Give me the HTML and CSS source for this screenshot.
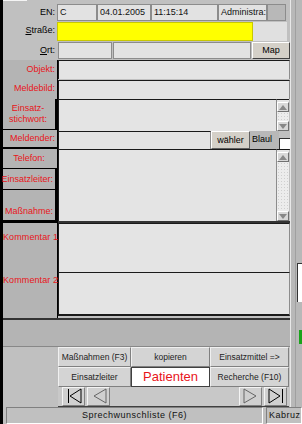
FILE: index.html
```html
<!DOCTYPE html>
<html lang="de">
<head>
    <meta charset="UTF-8">
    <title>Einsatz</title>
    <link rel="stylesheet" href="styles.css">
</head>
<body>
<div class="screen">
    <div class="body">
        <div class="main">
            <div class="topstrip"><span class="tabline"></span></div>

            <div class="row r1">
                <div class="lbl">EN:</div>
                <div class="fld w40">C</div>
                <div class="fld w54">04.01.2005</div>
                <div class="fld w67">11:15:14</div>
                <div class="fld w49">Administra:</div>
                <div class="fld dark w19"></div>
            </div>
            <div class="row r2">
                <div class="lbl"><u>S</u>traße:</div>
                <div class="fld yellow w196"></div>
                <div class="fld plain w34"></div>
            </div>
            <div class="row r3">
                <div class="lbl"><u>O</u>rt:</div>
                <div class="fld w54"></div>
                <div class="fld w138"></div>
                <div class="btn map">Map</div>
            </div>

            <div class="sect s-a">
                <div class="labels">
                    <div class="lbox h39">
                        <div class="rl" style="height:19px">Objekt:</div>
                        <div class="rl" style="height:19px">Meldebild:</div>
                    </div>
                </div>
                <div class="fields">
                    <div class="area" style="height:19px"></div>
                    <div class="area" style="height:19px"></div>
                </div>
            </div>

            <div class="sect s-b">
                <div class="labels">
                    <div class="lbox narrow" style="height:30px"><div class="rl center">Einsatz-<br>stichwort:</div></div>
                    <div class="lbox" style="height:17px"><div class="rl">Meldender:</div></div>
                </div>
                <div class="fields">
                    <div class="arearow" style="height:32px">
                        <div class="area grow"></div>
                        <div class="scroll">
                            <div class="sbtn"><svg width="8" height="5"><polygon points="4,0 8,5 0,5" fill="#888"/></svg></div>
                            <div class="strack"></div>
                            <div class="sbtn"><svg width="8" height="5"><polygon points="0,0 8,0 4,5" fill="#888"/></svg></div>
                        </div>
                    </div>
                    <div class="arearow" style="height:18px">
                        <div class="area grow"></div>
                        <div class="btn waehler">wähler</div>
                        <div class="blaul">Blaul</div>
                        <div class="check"></div>
                    </div>
                </div>
            </div>

            <div class="sect s-c">
                <div class="labels">
                    <div class="lbox" style="height:19px"><div class="rl center">Telefon:</div></div>
                    <div class="lbox narrow" style="height:20px"><div class="rl">Einsatzleiter:</div></div>
                    <div class="lbox narrow" style="height:30px"><div class="rl bottom">Maßnahme:</div></div>
                </div>
                <div class="fields">
                    <div class="arearow" style="height:72px">
                        <div class="area grow"></div>
                        <div class="scroll">
                            <div class="sbtn"><svg width="8" height="5"><polygon points="4,0 8,5 0,5" fill="#888"/></svg></div>
                            <div class="strack"></div>
                            <div class="sbtn"><svg width="8" height="5"><polygon points="0,0 8,0 4,5" fill="#888"/></svg></div>
                        </div>
                    </div>
                </div>
            </div>

            <div class="sect s-d">
                <div class="labels">
                    <div class="lbox wide" style="height:95px">
                        <div class="kl k1">Kommentar 1:</div>
                        <div class="kl k2">Kommentar 2:</div>
                    </div>
                </div>
                <div class="fields">
                    <div class="area" style="height:49px"></div>
                    <div class="area last" style="height:44px"></div>
                </div>
            </div>

            <div class="bar"></div>

            <div class="tabs">
                <div class="tabspace"></div>
                <div class="tabpanel">
                    <div class="tabgrid">
                        <div class="tab">Maßnahmen (F3)</div>
                        <div class="tab">kopieren</div>
                        <div class="tab">Einsatzmittel =&gt;</div>
                        <div class="tab">Einsatzleiter</div>
                        <div class="tab active">Patienten</div>
                        <div class="tab">Recherche (F10)</div>
                    </div>
                    <div class="nav">
                        <div class="nbtn"><svg width="20" height="16"><line x1="4.5" y1="1" x2="4.5" y2="15" stroke="#000"/><polygon points="17,1 6,8 17,15" fill="none" stroke="#000"/></svg></div>
                        <div class="nbtn"><svg width="20" height="16"><polygon points="17,1 5,8 17,15" fill="none" stroke="#666"/></svg></div>
                        <div class="navgap"></div>
                        <div class="nbtn"><svg width="20" height="16"><polygon points="3,1 15,8 3,15" fill="none" stroke="#666"/></svg></div>
                        <div class="nbtn"><svg width="20" height="16"><polygon points="3,1 14,8 3,15" fill="none" stroke="#000"/><line x1="16.5" y1="1" x2="16.5" y2="15" stroke="#000"/></svg></div>
                    </div>
                </div>
            </div>
        </div>
        <div class="side">
            <div class="sideline"></div>
            <div class="sidebox"></div>
            <div class="sidegreen"></div>
        </div>
    </div>
    <div class="status">
        <div class="spanel">Sprechwunschliste (F6)</div>
        <div class="spanel small">Kabruz</div>
    </div>
</div>
</body>
</html>
```

FILE: styles.css
```css
body { margin: 0; background: #b4b4b4; font-family: "Liberation Sans", Arial, sans-serif; font-size: 9px; }
.screen { width: 302px; height: 424px; display: flex; flex-direction: column; overflow: hidden; }
.body { display: flex; height: 407px; }
.main { width: 287px; border-left: 3px solid #000; background: #c0c0c0; display: flex; flex-direction: column; }
.topstrip { height: 4px; }
.tabline { display: block; width: 24px; height: 1px; background: #f4f4f4; }

.row { display: flex; align-items: stretch; }
.r1 { height: 17px; }
.r2 { height: 19px; padding-top: 1px; }
.r3 { height: 18px; padding-top: 1px; padding-bottom: 1px; gap: 1px; }
.lbl { width: 52px; padding-right: 2px; text-align: right; line-height: 17px; color: #000; }
.fld { box-sizing: border-box; border: 1px solid #8c8c8c; background: #e2e2e2; padding-left: 2px; line-height: 15px; color: #111; white-space: nowrap; overflow: hidden; }
.fld.dark { background: #b8b8b8; }
.fld.yellow { background: #ffff00; border-color: #c8c800; }
.fld.plain { border: none; background: #e0e0e0; }
.w19 { width: 19px; } .w34 { width: 34px; } .w40 { width: 40px; } .w49 { width: 49px; }
.w54 { width: 54px; } .w67 { width: 67px; } .w138 { width: 138px; } .w196 { width: 196px; }

.btn { box-sizing: border-box; background: #d4d0c8; border: 1px solid; border-color: #fff #404040 #404040 #fff; text-align: center; color: #000; }
.map { width: 38px; line-height: 15px; }

.sect { display: flex; }
.labels { width: 55px; background: #000; display: flex; flex-direction: column; gap: 1px; }
.lbox { background: #b4b4b4; width: 54px; box-sizing: border-box; }
.lbox.narrow { width: 52px; }
.lbox.wide { width: 54px; }
.h39 { height: 39px; }
.rl { color: #e8141a; text-align: right; padding-right: 2px; display: flex; align-items: center; justify-content: flex-end; height: 100%; line-height: 11px; }
.rl.center { text-align: center; justify-content: center; }
.rl.bottom { align-items: flex-end; padding-bottom: 3px; box-sizing: border-box; }
.kl { color: #e8141a; font-size: 9px; padding-left: 0; white-space: nowrap; line-height: 11px; letter-spacing: 0.1px; }
.k1 { padding-top: 9px; }
.k2 { padding-top: 32px; }

.fields { width: 232px; display: flex; flex-direction: column; }
.area { box-sizing: border-box; background: #e4e4e4; border-top: 1px solid #1a1a1a; border-left: 1px solid #1a1a1a; border-right: 1px solid #8c8c8c; }
.area.last { border-bottom: 2px solid #1a1a1a; }
.s-a .area + .area { margin-top: 1px; }
.s-d .fields { border-top: 2px solid #333; }
.s-d .labels { border-top: 2px solid #000; }
.arearow { display: flex; }
.grow { flex: 1; }
.scroll { width: 12px; display: flex; flex-direction: column; background: #e4e4e4; border-top: 1px solid #1a1a1a; padding-top: 2px; box-sizing: border-box; margin-right: 1px; }
.sbtn { height: 10px; box-sizing: border-box; background: #d8d8d8; border: 1px solid; border-color: #fff #707070 #707070 #fff; display: flex; align-items: center; justify-content: center; }
.strack { flex: 1; background-image: radial-gradient(#cfcfcf 40%, transparent 45%); background-size: 3px 3px; background-color: #ececec; }
.waehler { width: 39px; line-height: 16px; font-size: 9px; border-color: #fff #606060 #606060 #fff; }
.blaul { width: 29px; background: #b8b8b8; line-height: 16px; padding-left: 2px; box-sizing: border-box; color: #000; }
.check { width: 10px; height: 10px; margin-top: 7px; background: #fff; border: 1px solid #303030; border-right: none; }
.s-b .arearow + .arearow .area { border-top: 1px solid #1a1a1a; }

.bar { height: 26px; background: #b4b4b4; border-top: 2px solid #333; }
.tabs { display: flex; height: 61px; background: #c8c8c8; border-top: 1px solid #888; }
.tabspace { width: 55px; background: #c0c0c0; }
.tabpanel { width: 231px; display: flex; flex-direction: column; }
.tabgrid { display: grid; grid-template-columns: 73px 79px 79px; grid-auto-rows: 20px; }
.tab { box-sizing: border-box; background: #d4d4d4; border: 1px solid; border-color: #f0f0f0 #808080 #808080 #f0f0f0; text-align: center; line-height: 18px; color: #222; white-space: nowrap; overflow: hidden; font-size: 8.5px; }
.tab.active { background: #fff; color: #e8141a; font-size: 13px; border-color: #404040; line-height: 18px; }
.nav { display: flex; height: 20px; padding-left: 4px; border-bottom: 1px solid #404040; box-sizing: border-box; }
.nbtn { width: 23px; height: 19px; box-sizing: border-box; background: #d0d0d0; border: 1px solid; border-color: #f4f4f4 #808080 #808080 #f4f4f4; display: flex; align-items: center; justify-content: center; margin-right: 2px; }
.navgap { flex: 1; }

.side { width: 12px; background: #b8b8b8; position: relative; border-left: 1px solid #e8e8e8; box-sizing: border-box; }
.sideline { position: absolute; left: 4px; top: 0; bottom: 0; width: 1px; background: #a0a0a0; }
.sidebox { position: absolute; left: 6px; top: 263px; width: 6px; height: 38px; background: #fff; border-left: 1px solid #333; border-top: 1px solid #333; }
.sidegreen { position: absolute; left: 8px; top: 330px; width: 3px; height: 14px; background: #1aa31a; }

.status { display: flex; height: 17px; border-left: 3px solid #000; background: #c0c0c0; padding-left: 3px; gap: 3px; }
.spanel { width: 257px; box-sizing: border-box; border: 1px solid; border-color: #808080 #fff #fff #808080; text-align: center; line-height: 15px; color: #111; letter-spacing: 0.5px; }
.spanel.small { width: 36px; text-align: left; padding-left: 2px; }
```
